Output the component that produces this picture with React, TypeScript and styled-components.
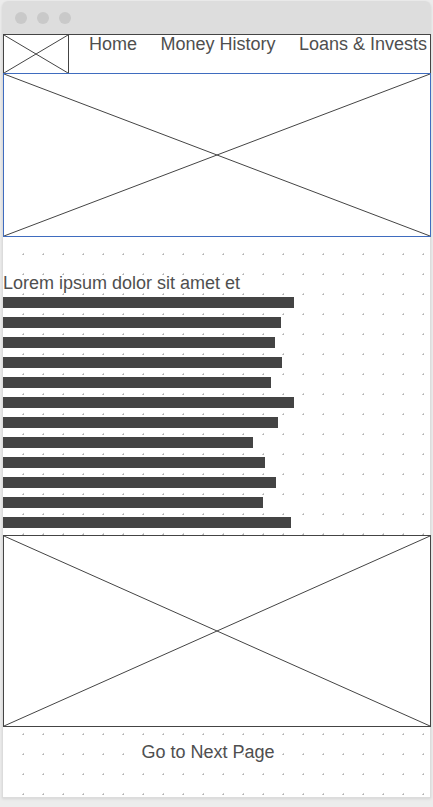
import React from 'react';
import styled, { createGlobalStyle } from 'styled-components';

const GlobalStyle = createGlobalStyle`
  * { box-sizing: border-box; }
  body {
    margin: 0;
    background: #ececec;
    color: #4f4f4f;
    font: 18px/20px "Liberation Sans", Arial, sans-serif;
  }
`;

const Window = styled.div`
  margin: 1px 2px 9px;
  border-radius: 6px 6px 0 0;
  box-shadow: 0 1px 3px rgba(0, 0, 0, 0.1);
`;

const TitleBar = styled.div`
  display: flex;
  align-items: center;
  gap: 10px;
  height: 33px;
  padding: 0 13px;
  border-radius: 6px 6px 0 0;
  background: #dddddd;
`;

const Dot = styled.span`
  width: 12px;
  height: 12px;
  border-radius: 50%;
  background: #c9c9c9;
`;

/* The first layer keeps the left margin clear of grid dots. */
const Canvas = styled.div`
  padding: 0 0 1px 1px;
  box-shadow: inset 0 0 0 1px #dcdcdc;
  background:
    linear-gradient(#ffffff, #ffffff) 0 0 / 10px 100% no-repeat,
    url("data:image/svg+xml,%3Csvg xmlns='http://www.w3.org/2000/svg' width='20' height='20'%3E%3Cpath d='M1 0h1v1H1z' fill='%23cccccc'/%3E%3Cpath d='M0 1h1v1H0z' fill='%23cccccc'/%3E%3Cpath d='M1 1h1v1H1z' fill='%23b0b0b0'/%3E%3C/svg%3E") 0 19px / 20px 20px,
    #ffffff;
`;

const Header = styled.header`
  display: flex;
  height: 39px;
  border: solid #444444;
  border-width: 1px 1px 0;
  background: #ffffff;
`;

const Logo = styled.div`
  flex: none;
  width: 65px;
  border-right: 1px solid #444444;
`;

const Nav = styled.nav`
  flex: 1;
  display: flex;
  justify-content: space-between;
  padding: 0 3px 0 20px;
  line-height: 18px;
  white-space: nowrap;
`;

const NavLink = styled.a`
  color: inherit;
  text-decoration: none;
`;

const Frame = styled.div<{ $height: number; $color: string }>`
  height: ${({ $height }) => $height}px;
  border: 1px solid ${({ $color }) => $color};
  background: #ffffff;
`;

const CrossSvg = styled.svg`
  display: block;
  width: 100%;
  height: 100%;
  stroke: #444444;
  stroke-width: 1;
`;

const Article = styled.main`
  padding: 36px 0 7px;
`;

const Heading = styled.h1`
  margin: 0 0 4px;
  font: inherit;
`;

const Lines = styled.div`
  display: grid;
  gap: 9px;
`;

const Line = styled.div<{ $width: number }>`
  width: ${({ $width }) => $width}px;
  max-width: 100%;
  height: 11px;
  background: #444444;
`;

const Footer = styled.footer`
  padding: 15px 18px 35px 0;
  text-align: center;
`;

const NextButton = styled.button`
  display: inline-block;
  padding: 0;
  border: 0;
  background: none;
  color: inherit;
  font: inherit;
  vertical-align: top;
  cursor: pointer;
`;

const lineWidths = [291, 278, 272, 279, 268, 291, 275, 250, 262, 273, 260, 288];

const Cross = () => (
  <CrossSvg viewBox="0 0 100 100" preserveAspectRatio="none" aria-hidden="true">
    <path d="M0 0L100 100M0 100L100 0" vectorEffect="non-scaling-stroke" />
  </CrossSvg>
);

export default function App() {
  return (
    <>
      <GlobalStyle />
      <Window>
        <TitleBar>
          <Dot />
          <Dot />
          <Dot />
        </TitleBar>
        <Canvas>
          <Header>
            <Logo>
              <Cross />
            </Logo>
            <Nav>
              <NavLink href="#home">Home</NavLink>
              <NavLink href="#history">Money History</NavLink>
              <NavLink href="#loans">Loans &amp; Invests</NavLink>
            </Nav>
          </Header>
          <Frame $height={164} $color="#3f6cbf">
            <Cross />
          </Frame>
          <Article>
            <Heading>Lorem ipsum dolor sit amet et</Heading>
            <Lines>
              {lineWidths.map((width, index) => (
                <Line key={index} $width={width} />
              ))}
            </Lines>
          </Article>
          <Frame $height={192} $color="#444444">
            <Cross />
          </Frame>
          <Footer>
            <NextButton type="button">Go to Next Page</NextButton>
          </Footer>
        </Canvas>
      </Window>
    </>
  );
}
